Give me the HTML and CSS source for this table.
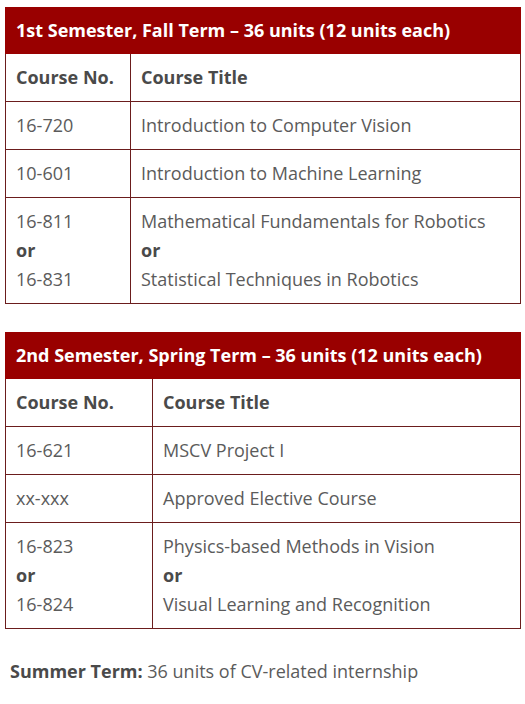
FILE: index.html
```html
<!DOCTYPE html>
<html lang="en">
<head>
<meta charset="utf-8">
<title>Curriculum</title>
<link rel="stylesheet" href="styles.css">
</head>
<body>
<div class="page">
  <table class="term term-fall">
    <colgroup><col class="col-no"><col></colgroup>
    <thead>
      <tr><th class="term-head" colspan="2">1st Semester, Fall Term – 36 units (12 units each)</th></tr>
    </thead>
    <tbody>
      <tr><th>Course No.</th><th>Course Title</th></tr>
      <tr><td>16-720</td><td>Introduction to Computer Vision</td></tr>
      <tr><td>10-601</td><td>Introduction to Machine Learning</td></tr>
      <tr><td>16-811<br><strong>or</strong><br>16-831</td><td>Mathematical Fundamentals for Robotics<br><strong>or</strong><br>Statistical Techniques in Robotics</td></tr>
    </tbody>
  </table>

  <table class="term term-spring">
    <colgroup><col class="col-no"><col></colgroup>
    <thead>
      <tr><th class="term-head" colspan="2">2nd Semester, Spring Term – 36 units (12 units each)</th></tr>
    </thead>
    <tbody>
      <tr><th>Course No.</th><th>Course Title</th></tr>
      <tr><td>16-621</td><td>MSCV Project I</td></tr>
      <tr><td>xx-xxx</td><td>Approved Elective Course</td></tr>
      <tr><td>16-823<br><strong>or</strong><br>16-824</td><td>Physics-based Methods in Vision<br><strong>or</strong><br>Visual Learning and Recognition</td></tr>
    </tbody>
  </table>

  <p class="summer"><strong>Summer Term:</strong> 36 units of CV-related internship</p>
</div>
</body>
</html>
```

FILE: styles.css
```css
html, body {
  margin: 0;
  padding: 0;
  background: #ffffff;
}

.page {
  padding: 7px 4px 0 5px;
  font-family: "Open Sans", "Liberation Sans", sans-serif;
  font-size: 18px;
  line-height: 29px;
  color: #5b5b5b;
}

.term {
  width: 516px;
  border-collapse: collapse;
  table-layout: fixed;
  margin: 0 0 28px 0;
}

.term-fall .col-no { width: 125px; }
.term-spring .col-no { width: 147px; }

.term th,
.term td {
  border: 1px solid #6b1d1d;
  padding: 9px 10px;
  text-align: left;
  vertical-align: top;
}

.term th {
  font-weight: 700;
  color: #4a4a4a;
}

.term strong {
  font-weight: 700;
  color: #4a4a4a;
}

.term .term-head {
  background: #990000;
  border-color: #990000;
  color: #ffffff;
  padding: 8px 10px;
}

.summer {
  margin: 28px 0 0 5px;
  color: #5b5b5b;
}

.summer strong {
  color: #4a4a4a;
}
```
